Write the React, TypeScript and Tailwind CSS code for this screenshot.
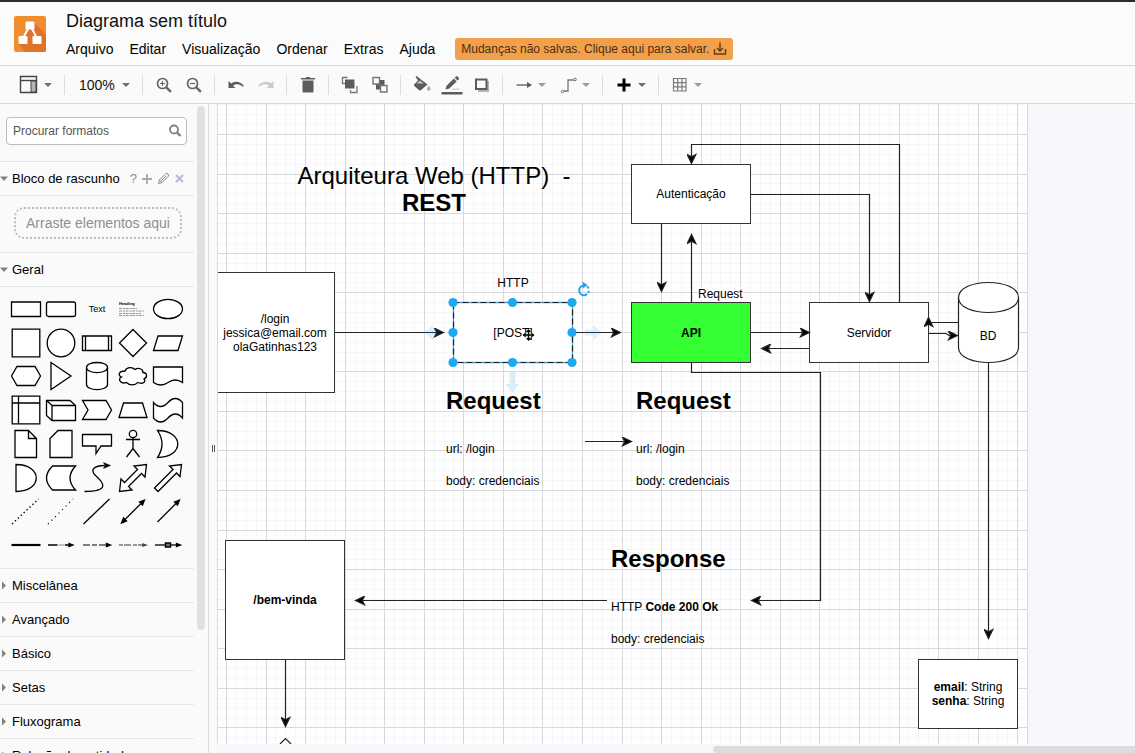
import React from "react";
import type { ReactNode } from "react";

const INK = "#5c5c5c";

/* ---------- toolbar ---------- */

function Caret({ faint = false }: { faint?: boolean }) {
  return (
    <svg width="10" height="10" viewBox="0 0 10 10" aria-hidden="true" className="shrink-0">
      <path d="M1 3h8L5 7z" fill={faint ? "#9b9b9b" : "#6f6f6f"} />
    </svg>
  );
}

function Separator() {
  return <div className="mr-[6px] ml-[5px] h-5 w-px shrink-0 bg-[#dcdce0]" />;
}

function Tool({ label, children }: { label: string; children: ReactNode }) {
  return (
    <button type="button" aria-label={label} className="flex h-7 w-[30px] shrink-0 items-center justify-center">
      <svg width="22" height="22" viewBox="0 0 22 22" fill="none" aria-hidden="true">
        {children}
      </svg>
    </button>
  );
}

function DropTool({ label, faint, children }: { label: string; faint?: boolean; children: ReactNode }) {
  return (
    <button type="button" aria-label={label} className="flex h-7 w-11 shrink-0 items-center gap-[2px] pl-1">
      <svg width="22" height="22" viewBox="0 0 22 22" fill="none" aria-hidden="true" className="shrink-0">
        {children}
      </svg>
      <Caret faint={faint} />
    </button>
  );
}

function Toolbar() {
  return (
    <div className="flex h-[38px] shrink-0 items-center overflow-hidden border-b border-[#dadbe2] bg-[#fafafa] pl-[15px]">
      <DropTool label="Visualização">
        <path d="M1.500 2.500h16v16h-16z" stroke="#444" strokeWidth="1.4" />
        <path d="M1.500 6.500h16" stroke="#444" strokeWidth="1.4" />
        <path d="M12 7h5v11h-5z" fill="#b5b5b5" stroke="#444" />
      </DropTool>
      <Separator />
      <button type="button" className="flex h-7 w-[66px] shrink-0 items-center gap-[6px] pl-2 text-sm text-[#111]">
        100% <Caret />
      </button>
      <Separator />
      <Tool label="Mais zoom">
        <circle cx="9.5" cy="9.5" r="5" stroke="#666" strokeWidth="1.7" />
        <path d="M13.3 13.3l4.6 4.6" stroke="#666" strokeWidth="2.4" />
        <path d="M7 9.5h5M9.5 7v5" stroke="#666" strokeWidth="1.2" />
      </Tool>
      <Tool label="Menos zoom">
        <circle cx="9.5" cy="9.5" r="5" stroke="#666" strokeWidth="1.7" />
        <path d="M13.3 13.3l4.6 4.6" stroke="#666" strokeWidth="2.4" />
        <path d="M7 9.5h5" stroke="#666" strokeWidth="1.2" />
      </Tool>
      <Separator />
      <Tool label="Desfazer">
        <path d="M3.500 7v7h7L8 11.700C11 9.500 15 9.700 18 12.800l.8-1C15.300 7.500 10.300 6.300 6.200 9.500z" fill={INK} />
      </Tool>
      <Tool label="Refazer">
        <path d="M18.500 7v7h-7L14 11.700C11 9.500 7 9.700 4 12.800l-.8-1C6.700 7.500 11.700 6.300 15.800 9.500z" fill="#cbcbcb" />
      </Tool>
      <Separator />
      <Tool label="Excluir">
        <path d="M5.500 6.500h11V17.500q0 1-1 1h-9q-1 0-1-1zM4 4h4.500l1-1h3l1 1H18v1.600H4z" fill={INK} />
      </Tool>
      <Separator />
      <Tool label="Para frente">
        <path d="M8.500 3.500h-5v6h3M18 12v6.500h-6.500V16" stroke="#777" strokeWidth="1.3" />
        <path d="M6 5.500h9.500v9H6z" fill={INK} />
      </Tool>
      <Tool label="Para trás">
        <path d="M7 6h8.500v9.500H7z" fill={INK} />
        <path d="M4 3.500h6.500v6.500H4zM11.500 11.500h6.500v6.500h-6.500z" fill="#fafafa" stroke="#777" strokeWidth="1.4" />
      </Tool>
      <Separator />
      <Tool label="Cor de preenchimento">
        <path d="M4.500 3l1-1 11 8.500-6.700 5.700q-.8.600-1.600 0L3.300 12q-.8-.9 0-1.700l3.800-3.800z" fill={INK} />
        <path d="M9 6.500l-3.500 3h7.300z" fill="#c4c4c4" />
        <path d="M17.800 11.500q1.900 2.700 1.700 3.800a1.800 1.800 0 0 1-3.500 0q-.1-1.100 1.800-3.800z" fill="#a9a9a9" />
      </Tool>
      <Tool label="Cor da linha">
        <path d="M.5 18h21v2.500H.5z" fill={INK} />
        <path d="M4.500 15.500l1-3.800 7.300-7.200 2.900 2.900-7.300 7.100zM13.700 3.700l1.300-1.300q.8-.6 1.500 0l1.300 1.300q.7.800 0 1.500l-1.300 1.300z" fill={INK} />
        <path d="M11 15.200h7.500" stroke="#c4c4c4" />
      </Tool>
      <Tool label="Sombra">
        <path d="M7 7h11v11H7z" fill="#b4b4b4" />
        <path d="M5 5.500h10.500v9.500H5z" fill="#fafafa" stroke={INK} strokeWidth="2" />
      </Tool>
      <Separator />
      <DropTool label="Conexão" faint>
        <path d="M3.500 11h14" stroke={INK} strokeWidth="1.3" />
        <path d="M14 8l5 3-5 3z" fill={INK} />
      </DropTool>
      <DropTool label="Pontos de rota" faint>
        <path d="M6 17h5V6h6" stroke="#777" strokeWidth="1.3" />
        <circle cx="5.500" cy="17.500" r="1.300" fill="#fafafa" stroke="#777" />
        <circle cx="18" cy="5.500" r="1.300" fill="#fafafa" stroke="#777" />
      </DropTool>
      <Separator />
      <DropTool label="Inserir">
        <path d="M11 4.500v13M4.500 11h13" stroke="#000" strokeWidth="3" />
      </DropTool>
      <Separator />
      <DropTool label="Tabela" faint>
        <path d="M4.500 4.500h12.500v12.500H4.500zM8.700 4.500v12.500M12.900 4.500v12.500M4.500 8.700h12.500M4.500 12.900h12.500" stroke="#7b7b7b" strokeWidth="1.2" />
      </DropTool>
    </div>
  );
}

/* ---------- header ---------- */

const MENUS = ["Arquivo", "Editar", "Visualização", "Ordenar", "Extras", "Ajuda"];

function Header() {
  return (
    <header className="flex h-16 shrink-0 border-b border-[#dadbe2] bg-[#fbfbfb] pl-[14px]">
      <svg width="32" height="36" viewBox="0 0 32 36" className="mt-[14px] shrink-0" aria-label="Logo">
        <rect width="32" height="36" rx="2" fill="#ef8d2f" />
        <path d="M20 6l12 13v15q0 2-2 2H11l-7-9 5-7 5-8z" fill="#e0722a" />
        <path d="M15 11l-6.500 12M17 11l6.500 12" stroke="#fff" strokeWidth="2" />
        <rect x="11.500" y="5.500" width="9" height="8" rx="1.200" fill="#fff" />
        <rect x="4.500" y="20" width="9" height="8" rx="1.200" fill="#fff" />
        <rect x="18.500" y="20" width="9" height="8" rx="1.200" fill="#fff" />
      </svg>
      <div className="ml-5 flex flex-col pt-[6px]">
        <h1 className="text-lg leading-[26px] text-[#111]">Diagrama sem título</h1>
        <div className="flex items-center">
          <nav className="flex gap-4 text-sm leading-[30px] text-black">
            {MENUS.map((m) => (
              <button type="button" key={m}>
                {m}
              </button>
            ))}
          </nav>
          <button
            type="button"
            className="ml-5 flex h-[22px] items-center gap-1 rounded-[3px] bg-[#f2a04b] px-[6px] text-xs whitespace-nowrap text-[#4a2f12]"
          >
            Mudanças não salvas. Clique aqui para salvar.
            <svg width="14" height="14" viewBox="0 0 14 14" fill="none" stroke="#5d3d18" strokeWidth="1.4" aria-hidden="true">
              <path d="M1.500 7v5h11V7M7 .5v8M4 6l3 3 3-3" />
            </svg>
          </button>
        </div>
      </div>
    </header>
  );
}

/* ---------- sidebar ---------- */

const SHAPES: { name: string; art: ReactNode }[] = [
  { name: "Retângulo", art: <path d="M1.500 9h29v14.500h-29z" /> },
  { name: "Retângulo arredondado", art: <rect x="1.500" y="9" width="29" height="14.500" rx="2" /> },
  {
    name: "Texto",
    art: (
      <text x="16" y="19" fontSize="9" textAnchor="middle" fill="#000" stroke="none">
        Text
      </text>
    ),
  },
  {
    name: "Caixa de texto",
    art: (
      <>
        <text x="2" y="11.500" fontSize="4" fontWeight="bold" fill="#000" stroke="none">
          Heading
        </text>
        <path d="M2 15.500h18M2 18h25M2 20.500h22M2 22.500h25" stroke="#666" strokeWidth=".7" strokeDasharray="3 1 2 .6" />
      </>
    ),
  },
  { name: "Elipse", art: <ellipse cx="16" cy="16" rx="14.500" ry="9.700" /> },
  { name: "Quadrado", art: <path d="M2.200 2.200h27.600v27.600H2.200z" /> },
  { name: "Círculo", art: <circle cx="16" cy="16" r="13.800" /> },
  { name: "Processo", art: <path d="M1.500 9h29v14.500h-29zM4.500 9v14.500M27.500 9v14.500" /> },
  { name: "Losango", art: <path d="M16 2.500L29.500 16 16 29.500 2.500 16z" /> },
  { name: "Paralelogramo", art: <path d="M6 9h24.500L26 23.500H1.500z" /> },
  { name: "Hexágono", art: <path d="M7 6.500h18l5.500 9.500-5.500 9.500H7L1.500 16z" /> },
  { name: "Triângulo", art: <path d="M6 2.500L26 16 6 29.500z" /> },
  {
    name: "Cilindro",
    art: <path d="M5.500 7.500v17c0 6.700 21 6.700 21 0v-17c0-6.700-21-6.700-21 0s21 6.700 21 0" />,
  },
  {
    name: "Nuvem",
    art: <path d="M8 11c-7 0-7 5-3.500 6C0 19 4 24.500 9.500 22.500c3.500 3.500 9 3 11 0 5 2 9-.5 6.500-3.500 4-2 3-6.500-1-6.500 0-4-5-5-8-3-3-3-8.500-2.500-10 1.500z" />,
  },
  { name: "Documento", art: <path d="M1.500 7h29v15.500q-7.250-5-14.500 0t-14.500 0z" /> },
  { name: "Armazenamento interno", art: <path d="M2.200 2.200h27.600v27.600H2.200zM8.500 2.200v27.600M2.200 9h27.600" /> },
  { name: "Cubo", art: <path d="M1.500 6.500H25l5.500 5v15H7l-5.500-5zM1.500 6.500L7 11.500v15M7 11.500h23.500" /> },
  { name: "Passo", art: <path d="M1.500 6.500H25l5.500 9.500-5.500 9.500H1.500L7 16z" /> },
  { name: "Trapézio", art: <path d="M6.500 9h19L30 23.500H2z" /> },
  { name: "Fita", art: <path d="M1.500 8.500q7 8 14.500 0t14.500 0v15.500q-7-8-14.500 0t-14.500 0z" /> },
  { name: "Nota", art: <path d="M5 2.500h13.500l8 8v19H5zM18.500 2.500v8h8" /> },
  { name: "Cartão", art: <path d="M13 2.500h14v27H5v-19z" /> },
  { name: "Balão", art: <path d="M1.500 6.500h29V18H20l-5 7.500V18H1.500z" /> },
  {
    name: "Ator",
    art: (
      <>
        <circle cx="16" cy="6" r="3.700" />
        <path d="M16 9.700V20.500M9 11.500h14M16 20.500L9.500 29M16 20.500L22.500 29" />
      </>
    ),
  },
  { name: "Ou", art: <path d="M5.500 2.500c27 0 27 27 0 27q9-13.500 0-27z" /> },
  { name: "E", art: <path d="M6 2.500c27 0 27 27 0 27z" /> },
  { name: "Armazenamento", art: <path d="M7.500 4h23q-11 12 0 24h-23q-12-12 0-24z" /> },
  {
    name: "Curva",
    art: (
      <>
        <path d="M3.500 29.500c26 0 19-9 11-16-6-6-1-10 9-10" fill="none" />
        <path d="M29.500 3.500l-7-3 1.500 3L22.500 6.500z" fill="#000" strokeWidth=".5" />
      </>
    ),
  },
  { name: "Seta bidirecional", art: <path d="M29.500 2.500L28 15l-3.500-3.500-13 13 3.500 3.500-12.500 1.500L4 17l3.500 3.500 13-13L17 4z" /> },
  { name: "Seta", art: <path d="M29.500 2.500L28 14.500l-3.500-3.500-18.500 18.500-3.500-3.500L21 7.500 17.500 4z" /> },
  { name: "Linha tracejada", art: <path d="M2 29L28.500 4" strokeDasharray="1.500 2.500" /> },
  { name: "Linha pontilhada", art: <path d="M3 29L28 4" strokeDasharray="1 4" /> },
  { name: "Linha", art: <path d="M2.500 29L28.500 4" /> },
  {
    name: "Conector bidirecional",
    art: (
      <>
        <path d="M6 26.500L26 6.500" />
        <path d="M27.500 5l-5 2 3 3zM4.500 28l2-5 3 3z" fill="#000" />
      </>
    ),
  },
  {
    name: "Conector direcional",
    art: (
      <>
        <path d="M5.500 27L26 6.500" />
        <path d="M27.500 5l-5 2 3 3z" fill="#000" />
      </>
    ),
  },
  { name: "Ligação", art: <path d="M1.500 16h29" strokeWidth="2.200" /> },
  {
    name: "Conector com rótulo",
    art: (
      <>
        <path d="M3 16h9M20 16h6" />
        <path d="M12 16h8" stroke="#888" strokeDasharray="1 .6" />
        <path d="M28 16l-4-1.500v3z" fill="#000" />
      </>
    ),
  },
  {
    name: "Conector com dois rótulos",
    art: (
      <>
        <path d="M2 16h27" stroke="#555" strokeDasharray="7 2 5 2" />
        <path d="M29.500 16l-4-1.500v3z" fill="#000" />
      </>
    ),
  },
  {
    name: "Conector com três rótulos",
    art: (
      <>
        <path d="M2 16h27" stroke="#777" strokeDasharray="4 1 7 2" />
        <path d="M29 16l-3-1v2z" fill="#444" stroke="#444" />
      </>
    ),
  },
  {
    name: "Conector com símbolo",
    art: (
      <>
        <path d="M3 16h24" />
        <path d="M28.500 16l-4-1.500v3z" fill="#000" />
        <path d="M13.500 14h5v4h-5z" fill="#777" strokeWidth="1.500" />
      </>
    ),
  },
];

function SectionTitle({ open, children }: { open?: boolean; children: ReactNode }) {
  return (
    <button type="button" className="flex items-center text-[13px] leading-5 text-black">
      <svg width="12" height="10" viewBox="0 0 12 10" aria-hidden="true">
        <path d={open ? "M0 2.500h8L4 7z" : "M2 .5v8L6 4.500z"} fill="#808080" />
      </svg>
      {children}
    </button>
  );
}

const CLOSED = ["Miscelânea", "Avançado", "Básico", "Setas", "Fluxograma", "Relação de entidade"];

function Sidebar() {
  return (
    <aside className="flex w-[209px] shrink-0 overflow-hidden border-r border-[#dddde0] bg-[#fafafa]">
      <div className="w-[194px] shrink-0">
        <div className="border-b border-[#e6e6e8] px-[6px] pt-[13px] pb-4">
          <label className="flex h-7 w-[181px] items-center rounded-[4px] border border-[#bcbcbc] bg-white pr-1 pl-[6px]">
            <input
              type="text"
              aria-label="Procurar formatos"
              placeholder="Procurar formatos"
              className="min-w-0 flex-1 bg-transparent text-xs text-[#555] outline-none placeholder:text-[#555]"
            />
            <svg width="14" height="14" viewBox="0 0 14 14" fill="none" stroke="#808080" aria-hidden="true">
              <circle cx="6" cy="5.500" r="4" strokeWidth="1.800" />
              <path d="M9 8.500l3.500 3.500" strokeWidth="2.400" />
            </svg>
          </label>
        </div>

        <div className="flex h-[34px] items-center border-b border-[#e6e6e8]">
          <SectionTitle open>Bloco de rascunho</SectionTitle>
          <div className="ml-[10px] flex items-center gap-[5px] text-[#8c8c8c]">
            <button type="button" className="text-[13px] leading-5">?</button>
            <button type="button" aria-label="Adicionar">
              <svg width="10" height="10" viewBox="0 0 10 10" stroke="#a8a8a8" strokeWidth="1.800" aria-hidden="true">
                <path d="M5 0v10M0 5h10" />
              </svg>
            </button>
            <button type="button" aria-label="Editar rascunho">
              <svg width="13" height="13" viewBox="0 0 13 13" fill="none" stroke="#8c8c8c" aria-hidden="true">
                <path d="M1.500 11.500l.8-3.500 6.500-6.500q1.200-.6 2.200.5t.4 2.200L5 10.700zM4 9l5.500-5.500M2.300 8l2.700 2.700" />
              </svg>
            </button>
            <button type="button" aria-label="Fechar">
              <svg width="9" height="9" viewBox="0 0 9 9" stroke="#b4bccb" strokeWidth="2" aria-hidden="true">
                <path d="M1 1l7 7M8 1L1 8" />
              </svg>
            </button>
          </div>
        </div>

        <div className="border-b border-[#e6e6e8] pt-[11px] pr-3 pb-[13px] pl-[14px]">
          <div className="flex h-8 items-center justify-center rounded-[10px] border-2 border-dotted border-[#bdbdbd] text-sm whitespace-nowrap text-[#8f8f8f]">
            Arraste elementos aqui
          </div>
        </div>

        <div className="flex h-[34px] items-center border-b border-[#e6e6e8]">
          <SectionTitle open>Geral</SectionTitle>
        </div>

        <div className="border-b border-[#e6e6e8] pt-[5px] pb-[6px] pl-2">
          <div className="grid h-[270px] w-[178px] grid-cols-5 grid-rows-8">
            {SHAPES.map((s) => (
              <button type="button" key={s.name} aria-label={s.name} className="flex items-center justify-center">
                <svg
                  width="32"
                  height="32"
                  viewBox="0 0 32 32"
                  fill="#fff"
                  stroke="#000"
                  strokeWidth="1.300"
                  className="shrink-0"
                  aria-hidden="true"
                >
                  {s.art}
                </svg>
              </button>
            ))}
          </div>
        </div>

        {CLOSED.map((c) => (
          <div key={c} className="flex h-[34px] items-center border-b border-[#e6e6e8]">
            <SectionTitle>{c}</SectionTitle>
          </div>
        ))}
      </div>
      <div className="ml-[3px] w-2 pt-[2px]">
        <div className="h-[81%] rounded-full bg-[#e2e0e4]" />
      </div>
    </aside>
  );
}

/* ---------- diagram ---------- */

const PAGE_W = 811;
const PAGE_H = 640;
const STEP = 39.56;

function gridLines(first: number, limit: number, minor: boolean) {
  const out: number[] = [];
  const step = minor ? STEP / 4 : STEP;
  for (let v = first % step; v < limit; v += step) out.push(Math.round(v) + 0.5);
  return out;
}

function Grid() {
  return (
    <g>
      {[true, false].map((minor) => (
        <g key={String(minor)} stroke={minor ? "#f6f6f8" : "#d9d9db"}>
          {gridLines(8, PAGE_W, minor).map((x) => (
            <path key={x} d={`M${x} 0V${PAGE_H}`} />
          ))}
          {gridLines(30, PAGE_H, minor).map((y) => (
            <path key={y} d={`M0 ${y}H${PAGE_W}`} />
          ))}
        </g>
      ))}
    </g>
  );
}

const LINKS = [
  "M117 228.500H224",
  "M355 228.500H401",
  "M533 228.500H590",
  "M591 244.500H545",
  "M711 229.500H728L731 231.500H738",
  "M740 218.500H710.500V215",
  "M681.500 198V40.500H473.500V58",
  "M533 90.500H651.500V196",
  "M443.500 120V186",
  "M473.500 198V132",
  "M473.500 259V268.500H602.500V496.500H535",
  "M367 337.500H412",
  "M389 496.500H139",
  "M67.500 556V621",
  "M770.500 259V533",
];

function Layer({ children }: { children: ReactNode }) {
  return (
    <svg
      width={PAGE_W}
      height={PAGE_H}
      viewBox={`0 0 ${PAGE_W} ${PAGE_H}`}
      fill="none"
      className="pointer-events-none absolute top-0 left-0"
      aria-hidden="true"
    >
      {children}
    </svg>
  );
}

function Connectors() {
  return (
    <g stroke="#222" strokeWidth="1.200">
      <defs>
        <marker id="tip" viewBox="0 0 12 10" refX="9" refY="5" markerWidth="12" markerHeight="10" markerUnits="userSpaceOnUse" orient="auto">
          <path d="M10.500 5L1.500 .7 3.700 5 1.500 9.300z" fill="#000" />
        </marker>
      </defs>
      {LINKS.map((d) => (
        <path key={d} d={d} markerEnd="url(#tip)" />
      ))}
      <path d="M62 640l5.500-5.500L73 640" />
      <path d="M740.500 193.500v50c0 20 60 20 60 0v-50c0-20-60-20-60 0s60 20 60 0" fill="#fff" />
    </g>
  );
}

function Selection() {
  const xs = [235, 294.5, 354];
  const ys = [198.5, 228.5, 258.5];
  return (
    <Layer>
      <g fill="#29a8e8" opacity=".15">
        <path d="M206 228.500l9-8v5h7v6h-7v5z" />
        <path d="M384 228.500l-9-8v5h-8v6h8v5z" />
        <path d="M294.500 289l-7-9h4v-12h6v12h4z" />
      </g>
      <path d="M235.500 198.500h119v60h-119z" stroke="#4aa6dc" strokeWidth="1.300" />
      <path d="M235.500 198.500h119v60h-119z" stroke="#222" strokeWidth="1.200" strokeDasharray="6 3" />
      {xs.flatMap((x) => ys.map((y) => (x === 294.5 && y === 228.5 ? null : <circle key={`${x}-${y}`} cx={x} cy={y} r="4.600" fill="#1fa8f2" />)))}
      <path d="M365 181.700a4.800 4.800 0 1 0 5.800 4.500" stroke="#29a0e0" strokeWidth="2" strokeDasharray="17 1.500 2 1.500 2" />
      <path d="M370.500 184.500a4.800 4.800 0 0 0-1.500-2.200" stroke="#29a0e0" strokeWidth="2" />
      <path d="M364.500 177.500l.5 7 4.500-3.500z" fill="#29a0e0" />
      <path d="M310.500 226v10M305.500 231h10" stroke="#fff" strokeWidth="3" />
      <path d="M310.500 226v10M305.500 231h10" stroke="#000" strokeWidth="1.500" />
      <path d="M310.500 225l-2.500 3h5zM310.500 237l-2.500-3h5zM304.500 231l3-2.500v5zM316.500 231l-3-2.500v5z" fill="#000" />
    </Layer>
  );
}

function Node({ place, children }: { place: string; children?: ReactNode }) {
  return (
    <div className={`absolute flex flex-col items-center justify-center border border-[#333] text-center text-xs leading-[14px] ${place}`}>
      {children}
    </div>
  );
}

function Note({ place, title, children }: { place: string; title: string; children: ReactNode }) {
  return (
    <section className={`absolute flex flex-col gap-[18px] text-xs leading-[14px] whitespace-nowrap ${place}`}>
      <h2 className="mb-[9px] text-2xl leading-7 font-bold">{title}</h2>
      {children}
    </section>
  );
}

function Diagram() {
  return (
    <div className="relative h-[640px] w-[811px] shrink-0 overflow-hidden border-r border-l border-[#d9d9dd] bg-[#fefefe] text-black">
      <Layer>
        <Grid />
      </Layer>

      <h2 className="absolute top-[58px] left-[68px] w-[296px] text-center text-2xl leading-[27px] whitespace-pre">
        {"Arquiteura Web (HTTP)  -\n"}
        <b>REST</b>
      </h2>

      <Node place="top-[168px] left-[-3px] h-[121px] w-[120px] bg-white">
        <span>/login</span>
        <span>jessica@email.com</span>
        <span>olaGatinhas123</span>
      </Node>
      <Node place="top-[198px] left-[235px] h-[61px] w-[120px] bg-white">[POST]</Node>
      <Node place="top-[60px] left-[413px] h-[60px] w-[120px] bg-white">Autenticação</Node>
      <Node place="top-[198px] left-[413px] h-[61px] w-[120px] bg-[#33ff33]">
        <b>API</b>
      </Node>
      <Node place="top-[198px] left-[591px] h-[61px] w-[120px] bg-white">Servidor</Node>
      <Node place="top-[436px] left-[7px] h-[120px] w-[120px] bg-white">
        <b>/bem-vinda</b>
      </Node>
      <Node place="top-[555px] left-[700px] h-[70px] w-[100px] bg-white">
        <span>
          <b>email</b>: String
        </span>
        <span>
          <b>senha</b>: String
        </span>
      </Node>

      <Layer>
        <Connectors />
      </Layer>

      <span className="absolute top-[225px] left-[740px] w-[60px] text-center text-xs leading-[14px]">BD</span>
      <span className="absolute top-[172px] left-[235px] w-[120px] text-center text-xs leading-[14px]">HTTP</span>
      <span className="absolute top-[183px] left-[480px] bg-[#fefefe] text-xs leading-[14px]">Request</span>

      <Note place="top-[283px] left-[228px]" title="Request">
        <p>url: /login</p>
        <p>body: credenciais</p>
      </Note>
      <Note place="top-[283px] left-[418px]" title="Request">
        <p>url: /login</p>
        <p>body: credenciais</p>
      </Note>
      <Note place="top-[441px] left-[393px]" title="Response">
        <p>
          HTTP <b>Code 200 Ok</b>
        </p>
        <p>body: credenciais</p>
      </Note>

      <Selection />
    </div>
  );
}

export default function App() {
  return (
    <div className="flex h-screen flex-col overflow-hidden border-t-2 border-[#2d2930] bg-[#fbfbfb] font-['Liberation_Sans',Arial,sans-serif]">
      <Header />
      <Toolbar />
      <div className="flex min-h-0 flex-1">
        <Sidebar />
        <div className="flex w-2 shrink-0 items-center justify-center bg-[#fafafa]">
          <div className="mt-10 h-[7px] w-[3px] border-r border-l border-[#555]" />
        </div>
        <main className="flex min-w-0 flex-1 flex-col bg-[#f8f8fc]">
          <div className="min-h-0 flex-1 overflow-hidden">
            <Diagram />
          </div>
          <div className="flex h-[9px] shrink-0 items-end justify-end">
            <div className="h-[7px] w-[46%] rounded-l-full bg-[#dcdcde]" />
          </div>
        </main>
      </div>
    </div>
  );
}
